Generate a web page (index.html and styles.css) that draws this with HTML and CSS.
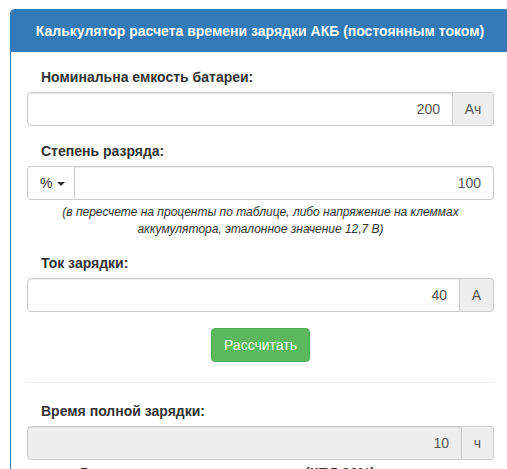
FILE: index.html
```html
<!DOCTYPE html>
<html>
<head>
<meta charset="utf-8">
<link rel="stylesheet" href="styles.css">
</head>
<body>
<div class="page">
  <div class="panel">
    <div class="panel-heading">Калькулятор расчета времени зарядки АКБ (постоянным током)</div>
    <div class="panel-body">
      <div class="form-group">
        <label class="label">Номинальна емкость батареи:</label>
        <div class="input-group">
          <div class="input">200</div>
          <div class="addon addon-ah">Ач</div>
        </div>
      </div>
      <div class="form-group">
        <label class="label">Степень разряда:</label>
        <div class="input-group">
          <div class="btn-drop">% <span class="caret"></span></div>
          <div class="input input-left">100</div>
        </div>
        <p class="help">(в пересчете на проценты по таблице, либо напряжение на клеммах аккумулятора, эталонное значение 12,7 В)</p>
      </div>
      <div class="form-group">
        <label class="label">Ток зарядки:</label>
        <div class="input-group">
          <div class="input">40</div>
          <div class="addon addon-a">А</div>
        </div>
      </div>
      <div class="actions">
        <button class="btn-success">Рассчитать</button>
      </div>
      <hr class="sep">
      <div class="form-group result">
        <label class="label">Время полной зарядки:</label>
        <div class="input-group">
          <div class="input readonly">10</div>
          <div class="addon addon-h">ч</div>
        </div>
      </div>
      <p class="note">Время зарядки с учетом потерь (КПД 80%):</p>
    </div>
  </div>
</div>
</body>
</html>
```
FILE: styles.css
```css
html, body {
  margin: 0;
  padding: 0;
  overflow: hidden;
  background: #fff;
}
body {
  font-family: "Liberation Sans", Arial, sans-serif;
  font-size: 14px;
  color: #333;
  line-height: 1.42857;
}
.page {
  padding: 9px 0 0 10px;
  width: 500px;
}
.panel {
  width: 500px;
  border: 1px solid #337ab7;
  border-radius: 4px;
  box-sizing: border-box;
}
.panel-heading {
  background: #337ab7;
  color: #fff;
  font-weight: bold;
  font-size: 14px;
  text-align: center;
  padding: 10px 5px;
  height: 42px;
  box-sizing: border-box;
  line-height: 22px;
  white-space: nowrap;
  border-radius: 3px 3px 0 0;
}
.panel-body {
  padding: 15px 15px 0 16px;
}
.form-group {
  margin-bottom: 15px;
}
.form-group.result {
  margin-bottom: 0;
}
.label {
  display: block;
  font-weight: bold;
  padding-left: 14px;
  margin-bottom: 5px;
  line-height: 20px;
}
.input-group {
  display: flex;
  height: 34px;
}
.input {
  flex: 1;
  border: 1px solid #ccc;
  border-radius: 4px 0 0 4px;
  box-shadow: inset 0 1px 1px rgba(0,0,0,.075);
  text-align: right;
  padding: 6px 12px;
  line-height: 20px;
  color: #555;
  box-sizing: border-box;
}
.input-left {
  border-radius: 0 4px 4px 0;
  border-left: 0;
}
.readonly {
  background: #eee;
}
.addon {
  background: #eee;
  border: 1px solid #ccc;
  border-left: 0;
  border-radius: 0 4px 4px 0;
  color: #555;
  text-align: center;
  line-height: 20px;
  padding: 6px 0;
  box-sizing: border-box;
}
.addon-ah { width: 41px; }
.addon-a { width: 34px; }
.addon-h { width: 32px; }
.btn-drop {
  width: 48px;
  border: 1px solid #ccc;
  border-radius: 4px 0 0 4px;
  box-sizing: border-box;
  padding: 6px 0 6px 12px;
  line-height: 20px;
  color: #333;
  background: #fff;
}
.caret {
  display: inline-block;
  width: 0;
  height: 0;
  margin-left: 1px;
  vertical-align: middle;
  border-top: 4px solid #333;
  border-left: 4px solid transparent;
  border-right: 4px solid transparent;
}
.help {
  margin: 4px 0 0 0;
  padding: 0 20px;
  font-style: italic;
  font-size: 12px;
  line-height: 17px;
  text-align: center;
  color: #333;
}
.actions {
  text-align: center;
  padding-top: 1px;
}
.btn-success {
  background: #5cb85c;
  border: 1px solid #4cae4c;
  border-radius: 4px;
  color: #fff;
  font-family: "Liberation Sans", Arial, sans-serif;
  font-size: 14px;
  height: 34px;
  padding: 6px 12px;
  line-height: 20px;
  width: 99px;
}
.sep {
  border: 0;
  border-top: 1px solid #eee;
  margin: 20px 0 18px 0;
}
.note {
  margin: 3px 0 0 0;
  font-weight: bold;
  padding-left: 53px;
  line-height: 20px;
}
```
